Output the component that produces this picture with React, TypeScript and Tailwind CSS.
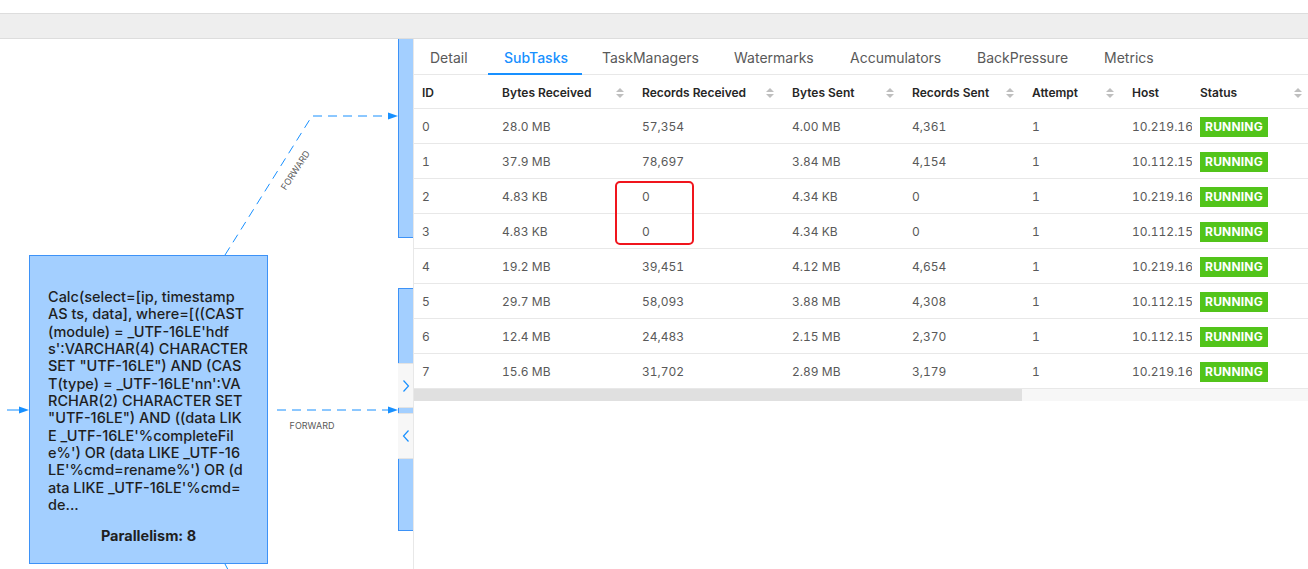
import React from "react";

const rows = [
  ["0", "28.0 MB", "57,354", "4.00 MB", "4,361", "1", "10.219.16"],
  ["1", "37.9 MB", "78,697", "3.84 MB", "4,154", "1", "10.112.15"],
  ["2", "4.83 KB", "0", "4.34 KB", "0", "1", "10.219.16"],
  ["3", "4.83 KB", "0", "4.34 KB", "0", "1", "10.112.15"],
  ["4", "19.2 MB", "39,451", "4.12 MB", "4,654", "1", "10.219.16"],
  ["5", "29.7 MB", "58,093", "3.88 MB", "4,308", "1", "10.112.15"],
  ["6", "12.4 MB", "24,483", "2.15 MB", "2,370", "1", "10.112.15"],
  ["7", "15.6 MB", "31,702", "2.89 MB", "3,179", "1", "10.219.16"],
];

const cols = [
  { title: "ID", w: "w-[80px]", sort: false },
  { title: "Bytes Received", w: "w-[140px]", sort: true },
  { title: "Records Received", w: "w-[150px]", sort: true },
  { title: "Bytes Sent", w: "w-[120px]", sort: true },
  { title: "Records Sent", w: "w-[120px]", sort: true },
  { title: "Attempt", w: "w-[100px]", sort: true },
  { title: "Host", w: "w-[68px]", sort: false },
  { title: "Status", w: "w-[120px]", sort: true },
];

const tabs = [
  { t: "Detail", w: "w-[70px]" },
  { t: "SubTasks", w: "w-[94px]" },
  { t: "TaskManagers", w: "w-[128px]" },
  { t: "Watermarks", w: "w-[112px]" },
  { t: "Accumulators", w: "w-[123px]" },
  { t: "BackPressure", w: "w-[123px]" },
  { t: "Metrics", w: "w-[100px]" },
];

const nodeLines = [
  "Calc(select=[ip, timestamp",
  "AS ts, data], where=[((CAST",
  "(module) = _UTF-16LE'hdf",
  "s':VARCHAR(4) CHARACTER",
  'SET "UTF-16LE") AND (CAS',
  "T(type) = _UTF-16LE'nn':VA",
  "RCHAR(2) CHARACTER SET",
  '"UTF-16LE") AND ((data LIK',
  "E _UTF-16LE'%completeFil",
  "e%') OR (data LIKE _UTF-16",
  "LE'%cmd=rename%') OR (d",
  "ata LIKE _UTF-16LE'%cmd=",
  "de...",
];

function SortIcon() {
  return (
    <svg width="8" height="12" viewBox="0 0 8 12" className="shrink-0">
      <polygon points="0,5 4,1 8,5" fill="#bfbfbf" />
      <polygon points="0,7 4,11 8,7" fill="#bfbfbf" />
    </svg>
  );
}

function Canvas() {
  return (
    <div className="relative w-[413px] shrink-0 h-full overflow-hidden bg-white">
      <svg className="absolute inset-0" width="413" height="530">
        <g stroke="#1890ff" strokeWidth="1" fill="none" strokeDasharray="9 6">
          <polyline points="225,216 312,77 390,77" />
          <line x1="277" y1="371" x2="390" y2="371" />
          <line x1="225" y1="525" x2="233" y2="540" />
        </g>
        <line x1="7" y1="371" x2="22" y2="371" stroke="#1890ff" strokeWidth="1" />
        <polygon points="388,73.5 398,77 388,80.5" fill="#1890ff" />
        <polygon points="388,367.5 398,371 388,374.5" fill="#1890ff" />
        <polygon points="19,367.5 29,371 19,374.5" fill="#1890ff" />
        <text
          x="0"
          y="0"
          fontSize="9"
          fill="#595959"
          fontFamily="Inter, sans-serif"
          textAnchor="middle"
          transform="translate(298,133) rotate(-57)"
        >
          FORWARD
        </text>
        <text x="312" y="390" fontSize="9" fill="#595959" fontFamily="Inter, sans-serif" textAnchor="middle">
          FORWARD
        </text>
      </svg>

      {/* upper partial node */}
      <div className="absolute left-[398px] top-[-10px] w-[30px] h-[209px] bg-[#a3cfff] border border-[#3d92f7]" />
      {/* lower partial node */}
      <div className="absolute left-[398px] top-[249px] w-[30px] h-[243px] bg-[#a3cfff] border border-[#3d92f7]" />
      {/* collapse buttons */}
      <div className="absolute left-[398px] top-[324px] w-[15px] h-[45px] bg-[#f7f7f7] border-y border-[#e3e3e3] flex items-center justify-center">
        <svg width="8" height="14" viewBox="0 0 8 14">
          <polyline points="1.5,1.5 6.5,7 1.5,12.5" fill="none" stroke="#1890ff" strokeWidth="1.2" />
        </svg>
      </div>
      <div className="absolute left-[398px] top-[374px] w-[15px] h-[46px] bg-[#f7f7f7] border-y border-[#e3e3e3] flex items-center justify-center">
        <svg width="8" height="14" viewBox="0 0 8 14">
          <polyline points="6.5,1.5 1.5,7 6.5,12.5" fill="none" stroke="#1890ff" strokeWidth="1.2" />
        </svg>
      </div>

      {/* main node */}
      <div className="absolute left-[29px] top-[216px] w-[239px] h-[309px] bg-[#a3cfff] border border-[#3d92f7] pt-[32px] pl-[18px] text-[14.5px] leading-[17.35px] text-[#1f1f1f] font-medium">
        {nodeLines.map((l, i) => (
          <div key={i} className="whitespace-pre">
            {l}
          </div>
        ))}
        <div className="mt-[14px] pr-[18px] text-center font-bold">Parallelism: 8</div>
      </div>
    </div>
  );
}

function Panel() {
  return (
    <div className="flex-1 min-w-0 h-full border-l border-[#e8e8e8] overflow-hidden bg-white flex flex-col">
      <div className="h-[36px] shrink-0 flex gap-1 border-b border-[#e8e8e8]">
        {tabs.map((t, i) => (
          <div
            key={t.t}
            className={
              "relative shrink-0 px-4 pt-[2px] flex items-center text-[14px] whitespace-nowrap " +
              t.w +
              (i === 1 ? " text-[#1890ff] font-medium" : " text-[#595959]")
            }
          >
            {t.t}
            {i === 1 && <div className="absolute left-0 right-0 bottom-[-1px] h-[2px] bg-[#1890ff]" />}
          </div>
        ))}
      </div>
      <div className="relative">
        <div className="w-[1318px]">
          <div className="flex h-[34px] border-b border-[#e8e8e8]">
            {cols.map((c) => (
              <div
                key={c.title}
                className={"shrink-0 flex items-center justify-between pl-2 pr-[10px] pt-[2px] text-[12px] font-semibold text-[#262626] whitespace-nowrap " + c.w}
              >
                <span>{c.title}</span>
                {c.sort && <SortIcon />}
              </div>
            ))}
          </div>
          {rows.map((r) => (
            <div key={r[0]} className="flex h-[35px] border-b border-[#e8e8e8] text-[12px] text-[#595959] tabular-nums">
              {r.map((v, j) => (
                <div
                  key={j}
                  className={"shrink-0 flex items-center pl-2 pt-[2px] overflow-hidden whitespace-nowrap " + cols[j].w}
                >
                  {v}
                </div>
              ))}
              <div className="shrink-0 w-[120px] flex items-center pl-2 pt-[1px]">
                <span className="bg-[#52c41a] text-white font-bold text-[12px] h-[20px] w-[68px] flex items-center justify-center tracking-[0.2px]">
                  RUNNING
                </span>
              </div>
            </div>
          ))}
        </div>
        <div className="h-[12px] bg-[#f7f7f7]">
          <div className="h-full w-[608px] bg-[#e0e0e0]" />
        </div>
        <div className="absolute left-[201px] top-[106px] w-[79px] h-[64px] border-2 border-[#f0151d] rounded-[5px]" />
      </div>
    </div>
  );
}

export default function App() {
  return (
    <div className="w-[1308px] h-[569px] overflow-hidden bg-white flex flex-col font-['Inter','Noto_Sans',sans-serif]">
      <div className="h-[13px] shrink-0 bg-white" />
      <div className="h-[26px] shrink-0 bg-[#eeeeee] border-y border-[#dddddd]" />
      <div className="flex-1 min-h-0 flex">
        <Canvas />
        <Panel />
      </div>
    </div>
  );
}
